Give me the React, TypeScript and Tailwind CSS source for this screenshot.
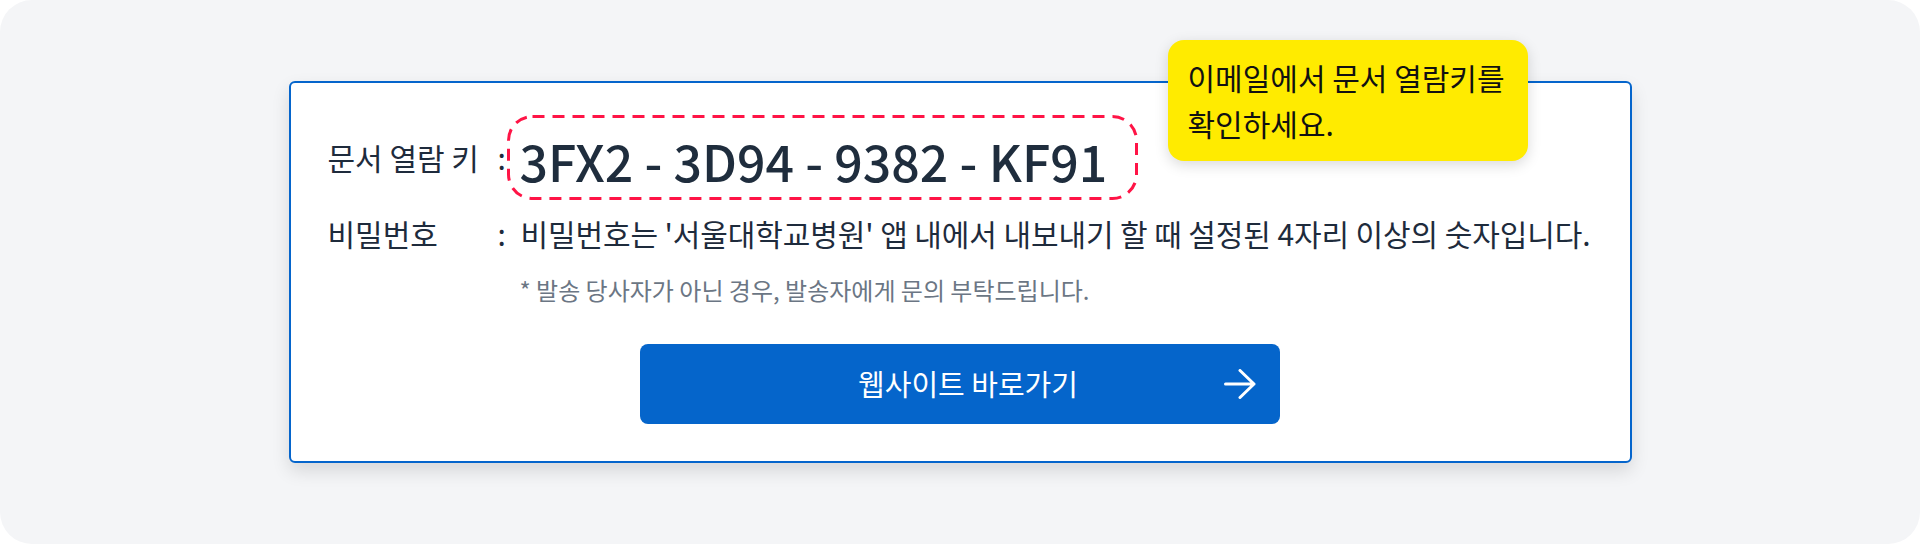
import React from 'react';

const font = { fontFamily: '"Noto Sans CJK KR", "Noto Sans", sans-serif' };

const KeyBox: React.FC<{ value: string }> = ({ value }) => (
  <div className="relative w-[631px] h-[85px] flex items-center pl-[13px] pt-[4px]">
    {/* dashed outline */}
    <svg className="absolute inset-0" width="631" height="85" viewBox="0 0 631 85" fill="none">
      <rect x="1.5" y="1.5" width="628" height="82" rx="24" stroke="#ff1446" strokeWidth="3" strokeDasharray="12 8" />
    </svg>
    <span className="relative whitespace-nowrap text-[50px] leading-none font-medium text-[#1f2d3d]">{value}</span>
  </div>
);

const ArrowIcon = () => (
  <svg width="32" height="30" viewBox="0 0 32 30" fill="none" stroke="white" strokeWidth="3" strokeLinecap="round" strokeLinejoin="round">
    <path d="M1.5 15H30M16 1.5L30 15L16 28.5" />
  </svg>
);

export default function App() {
  return (
    <div className="w-full h-[544px] bg-white" style={font}>
      <div className="h-full rounded-[32px] bg-[#f4f5f7] flex justify-center pt-[81px]">
        <div className="relative w-[1343px] h-[382px] border-2 border-[#0565cc] rounded-[6px] bg-white shadow-[0_8px_18px_rgba(0,0,0,0.12)] pt-[32px] pl-[37px]">
          {/* tooltip */}
          <div className="absolute top-[-43px] right-[102px] w-[360px] h-[121px] rounded-2xl bg-[#ffeb00] shadow-[0_4px_14px_rgba(0,0,0,0.15)] px-[20px] pt-[14px] whitespace-nowrap text-[30px] leading-[46px] text-[#111]">
            이메일에서 문서 열람키를
            <br />
            확인하세요.
          </div>

          <div className="flex items-center text-[30px] text-[#1e2b3c]">
            <span className="w-[170px] whitespace-nowrap">문서 열람 키</span>
            <span className="w-[9px]">:</span>
            <KeyBox value="3FX2 - 3D94 - 9382 - KF91" />
          </div>

          <div className="flex items-center mt-[13px] h-[40px] text-[30px] text-[#1e2b3c]">
            <span className="w-[170px]">비밀번호</span>
            <span className="w-[9px]">:</span>
            <span className="pl-[14px] whitespace-nowrap tracking-[-0.1px]">비밀번호는 '서울대학교병원' 앱 내에서 내보내기 할 때 설정된 4자리 이상의 숫자입니다.</span>
          </div>

          <div className="mt-[21px] pl-[192px] text-[24px] leading-[32px] text-[#6b7684]">
            * 발송 당사자가 아닌 경우, 발송자에게 문의 부탁드립니다.
          </div>

          <div className="pr-[37px] mt-[38px] flex justify-center">
            <button className="relative w-[640px] h-[80px] rounded-lg bg-[#0565cb] text-white text-[29px] flex items-center justify-center pl-[16px]">
              웹사이트 바로가기
              <span className="absolute right-[24px] top-[25px]">
                <ArrowIcon />
              </span>
            </button>
          </div>
        </div>
      </div>
    </div>
  );
}
